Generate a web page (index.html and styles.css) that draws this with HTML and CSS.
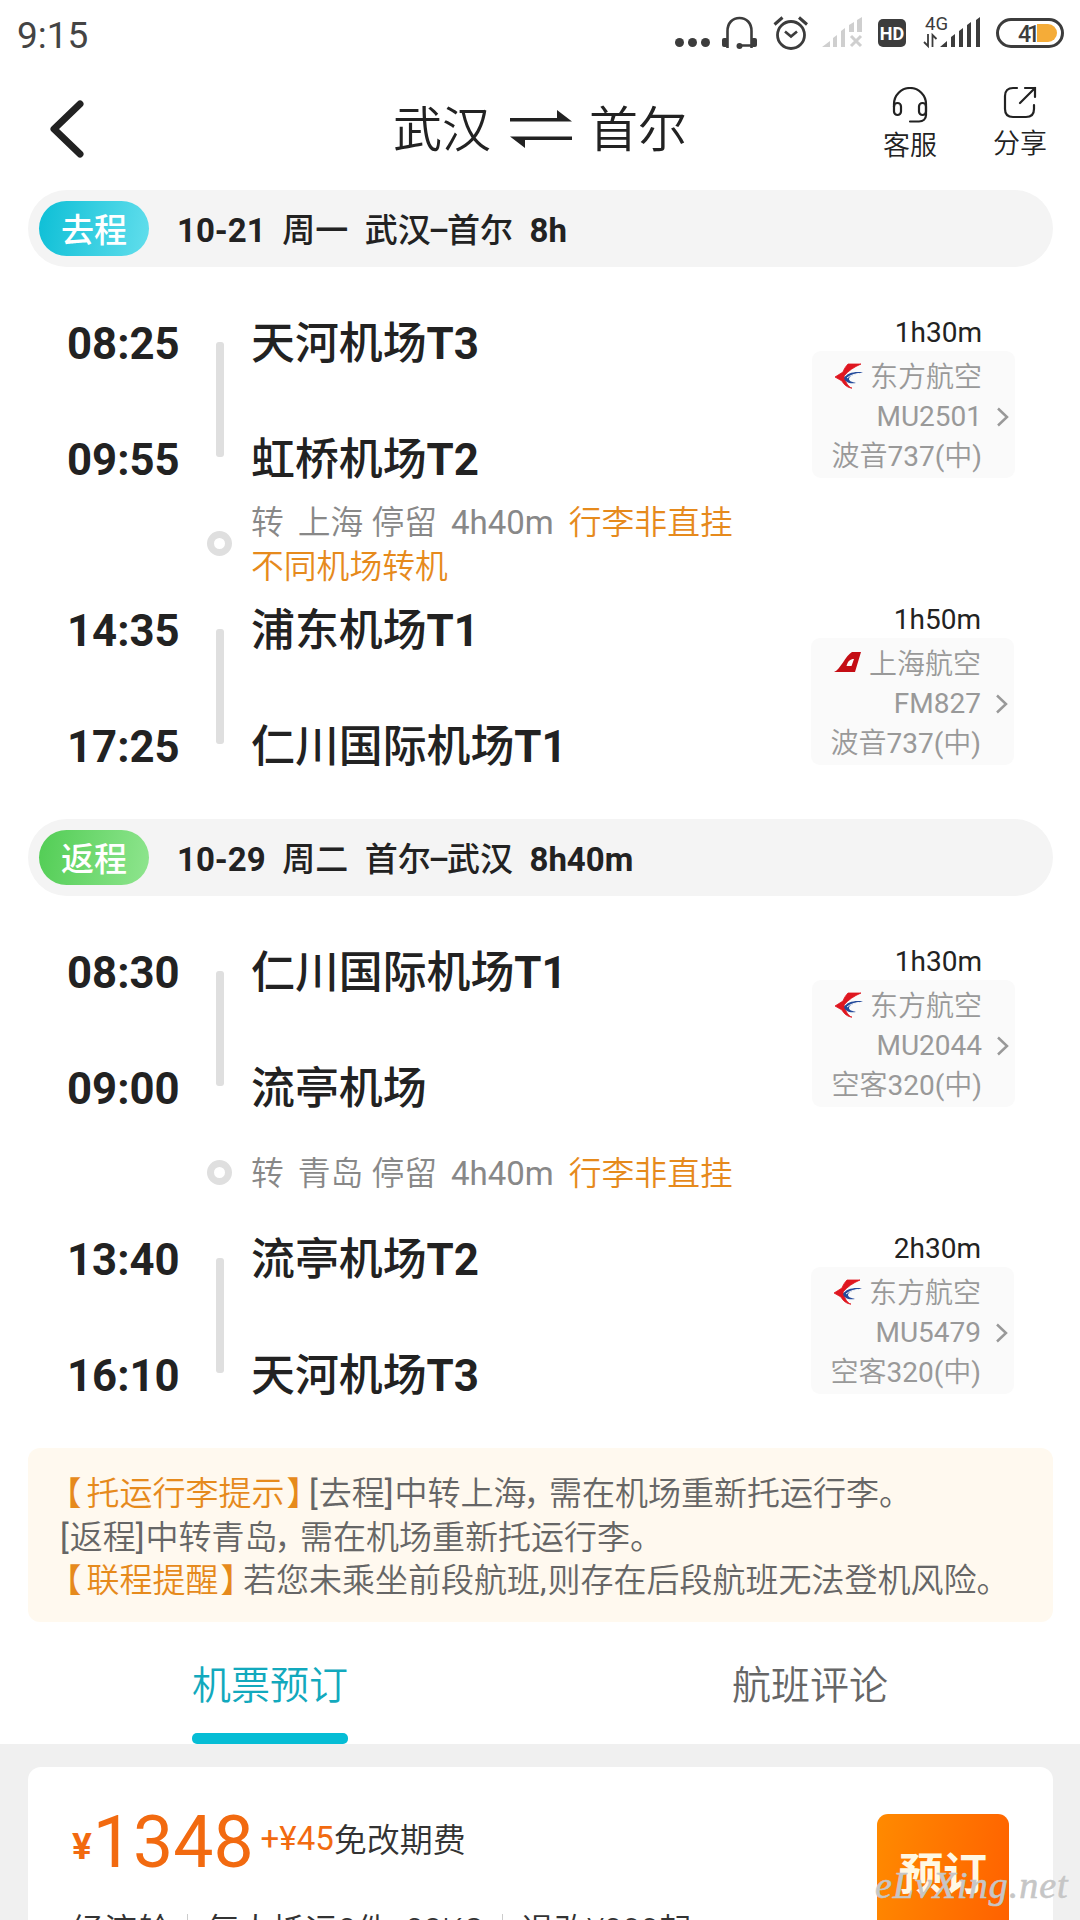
FILE: index.html
```html
<!DOCTYPE html>
<html lang="zh-CN">
<head>
<meta charset="utf-8">
<title>武汉 ⇌ 首尔</title>
<link rel="stylesheet" href="styles.css">
</head>
<body>
<svg class="defs" width="0" height="0">
  <symbol id="mu" viewBox="0 0 28 26">
    <path d="M26 1H13C11 3 9 6 8 9L0 14l7 4c2 4 6 7 10 7h-1c-3-2-5-5-6-9l-1-3C13 8 19 4 26 1z" fill="#df1620" stroke="#df1620" stroke-width=".8"/>
    <path d="M28 9.500C20 8 12 10 9 15c1 4 5 6 12 5-4-1-7-2-7-4 0-3 6-5.500 14-6.500z" fill="#244b9b"/>
    <path d="M12 15c3-2.500 7-4 12-4.500" stroke="#fafafa" stroke-width="1" fill="none"/>
  </symbol>
  <symbol id="fm" viewBox="0 0 28 26">
    <path fill-rule="evenodd" d="M0 22C6 20 12 5 18 2h9l-6 20zM12.500 16h5l2.500-7c-4 0-6 2-7.500 7z" fill="#c40d14"/>
  </symbol>
  <symbol id="chev" viewBox="0 0 14 20"><path d="M2 1.500l9 8.500-9 8.500" fill="none" stroke="#999" stroke-width="2.500"/></symbol>
</svg>
<div class="status">
  <span class="clock">9:15</span>
  <svg class="status-icons" width="400" height="40" viewBox="674 14 400 40" fill="none" stroke="#3c3c3c">
    <g fill="#3c3c3c" stroke="none"><circle cx="679.500" cy="42.500" r="4.500"/><circle cx="692.500" cy="42.500" r="4.500"/><circle cx="705.500" cy="42.500" r="4.500"/>
      <rect x="722" y="38" width="6" height="9" rx="2"/><rect x="751" y="38" width="6" height="9" rx="2"/><circle cx="739.500" cy="46" r="3"/></g>
    <path d="M727.500 48V31c0-8 5-13 12-13s12 5 12 13v17M740 45.500h11" stroke-width="2.600"/>
    <circle cx="791" cy="35" r="13.500" stroke-width="2.800"/><path d="M785 31.500l6 5 6-5" stroke-width="2.600"/><path d="M774.500 24.500l8-7M807 24.500l-8-7" stroke-width="3"/>
    <g fill="#cfcfcf" stroke="none"><path d="M822 47l8-6v6zM833 38l4-3v12h-4zM841 31l4-3v19h-4zM849 25l5-3v10h-5zM857 20l5-3v15h-5z"/></g>
    <path d="M851 36l10 10M861 36l-10 10" stroke="#cfcfcf" stroke-width="3"/>
    <rect x="878" y="19" width="28" height="28" rx="5" fill="#3c3c3c" stroke="none"/>
    <text class="hd" x="892" y="39.500" text-anchor="middle">HD</text>
    <text class="net" x="925" y="30">4G</text>
    <path d="M928 34v12l-4-4M932.500 47V35l4 4" stroke-width="1.800"/>
    <path d="M940 47l7-6v6zM951 37l4-3v13h-4zM959 31l4-3v19h-4zM967 25l4-3v25h-4zM976 20l4-3v30h-4z" fill="#3c3c3c" stroke="none"/>
    <rect x="997.500" y="19.500" width="65" height="27" rx="13.500" stroke-width="3"/>
    <path d="M1037 24h11a9 9 0 0 1 0 18h-11z" fill="#f5ac38" stroke="none"/>
    <text class="bat" x="1018" y="41.500" textLength="22">41</text>
  </svg>
</div>
<header class="nav">
  <svg width="36" height="60" viewBox="0 0 36 60"><path d="M31 5L5 30l26 25" fill="none" stroke="#222" stroke-width="7" stroke-linecap="round" stroke-linejoin="round"/></svg>
  <h1 class="route"><span>武汉</span><svg width="62" height="38" viewBox="0 0 62 38"><path d="M0 8h47V0l15 11.500H0zM62 30H15V38L0 26.500h62z" fill="#222"/></svg><span>首尔</span></h1>
  <div class="actions">
    <div class="action"><svg width="36" height="36" viewBox="0 0 36 36" fill="none" stroke="#222" stroke-width="2.200" stroke-linecap="round"><path d="M2 20v-3a16 16 0 0 1 32 0v11c0 4-3 6.500-7 6.500H18"/><rect x="2" y="16" width="7" height="12" rx="3.500"/><rect x="27" y="16" width="7" height="12" rx="3.500"/></svg><span>客服</span></div>
    <div class="action share"><svg width="36" height="36" viewBox="0 0 36 36" fill="none" stroke="#222" stroke-width="2.200" stroke-linecap="round"><path d="M15 3h-4c-5 0-8 3-8 8v13c0 5 3 8 8 8h13c5 0 8-3 8-8v-4M18 18L33 3M23 3h10v9"/></svg><span>分享</span></div>
  </div>
</header>
<main>
  <section class="trip">
    <div class="bar"><span class="tag">去程</span><div class="summary"><b>10-21</b><span>周一</span><span>武汉<em>–</em>首尔</span><b>8h</b></div></div>
    <div class="leg">
      <div class="times"><span>08:25</span><span>09:55</span></div><i class="line"></i>
      <div class="ports"><span>天河机场<b>T3</b></span><span>虹桥机场<b>T2</b></span></div>
      <div class="side"><span class="dur">1h30m</span><div class="flight"><div><svg class="logo"><use href="#mu"/></svg>东方航空</div><div class="no">MU2501<svg class="chev"><use href="#chev"/></svg></div><div>波音<b>737(</b>中<b>)</b></div></div></div>
    </div>
    <div class="transfer"><i class="ring"></i><div class="info"><p><span>转</span><span class="city">上海</span><span class="stay">停留</span><span class="wait">4h40m</span><b>行李非直挂</b></p><p><b>不同机场转机</b></p></div></div>
    <div class="leg">
      <div class="times"><span>14:35</span><span>17:25</span></div><i class="line"></i>
      <div class="ports"><span>浦东机场<b>T1</b></span><span>仁川国际机场<b>T1</b></span></div>
      <div class="side inset"><span class="dur">1h50m</span><div class="flight"><div><svg class="logo"><use href="#fm"/></svg>上海航空</div><div class="no">FM827<svg class="chev"><use href="#chev"/></svg></div><div>波音<b>737(</b>中<b>)</b></div></div></div>
    </div>
  </section>
  <section class="trip">
    <div class="bar"><span class="tag back">返程</span><div class="summary"><b>10-29</b><span>周二</span><span>首尔<em>–</em>武汉</span><b>8h40m</b></div></div>
    <div class="leg">
      <div class="times"><span>08:30</span><span>09:00</span></div><i class="line"></i>
      <div class="ports"><span>仁川国际机场<b>T1</b></span><span>流亭机场</span></div>
      <div class="side"><span class="dur">1h30m</span><div class="flight"><div><svg class="logo"><use href="#mu"/></svg>东方航空</div><div class="no">MU2044<svg class="chev"><use href="#chev"/></svg></div><div>空客<b>320(</b>中<b>)</b></div></div></div>
    </div>
    <div class="transfer"><i class="ring"></i><div class="info"><p><span>转</span><span class="city">青岛</span><span class="stay">停留</span><span class="wait">4h40m</span><b>行李非直挂</b></p></div></div>
    <div class="leg">
      <div class="times"><span>13:40</span><span>16:10</span></div><i class="line"></i>
      <div class="ports"><span>流亭机场<b>T2</b></span><span>天河机场<b>T3</b></span></div>
      <div class="side inset"><span class="dur">2h30m</span><div class="flight"><div><svg class="logo"><use href="#mu"/></svg>东方航空</div><div class="no">MU5479<svg class="chev"><use href="#chev"/></svg></div><div>空客<b>320(</b>中<b>)</b></div></div></div>
    </div>
  </section>
  <section class="notice">
    <p><b><span class="lb">【</span>托运行李提示<span class="rb">】</span></b><span class="sq">[</span>去程<span class="sq">]</span>中转上海<span class="cm">，</span>需在机场重新托运行李。</p>
    <p><span class="sq">[</span>返程<span class="sq">]</span>中转青岛<span class="cm">，</span>需在机场重新托运行李。</p>
    <p><b><span class="lb">【</span>联程提醒<span class="rb">】</span></b>若您未乘坐前段航班<span class="sq">,</span>则存在后段航班无法登机风险。</p>
  </section>
  <nav class="tabs"><span class="tab on">机票预订</span><span class="tab">航班评论</span></nav>
</main>
<section class="fares">
  <article class="fare">
    <div class="fare-info">
      <div class="price"><span class="yen">¥</span><span class="amount">1348</span><span class="plus">+¥45</span><span class="free">免改期费</span></div>
      <div class="terms"><span>经济舱</span><i></i><span>每人托运2件&nbsp; 23KG</span><i></i><span>退改¥200起</span><svg class="more"><use href="#chev"/></svg></div>
    </div>
    <div class="book">预订</div>
  </article>
</section>
<div class="mark">eLvXing.net</div>
</body>
</html>
```
FILE: styles.css
```css
* { box-sizing: border-box; margin: 0; padding: 0; }
body { width: 1080px; height: 1920px; overflow: hidden; position: relative; background: #fff; color: #222; font-family: Roboto, "Noto Sans CJK SC", sans-serif; display: flex; flex-direction: column; }
.defs { position: absolute; }
b, i, em { font-weight: inherit; font-style: normal; }
.status { height: 70px; padding: 14px 6px 0 17px; display: flex; justify-content: space-between; align-items: flex-start; color: #444; flex: none; }
.clock { font-size: 37px; line-height: 43px; }
.status-icons { flex: none; }
.status text { stroke: none; fill: #3c3c3c; }
.status .hd { fill: #fff; font-size: 18px; font-weight: 700; }
.status .net { font-size: 18.500px; }
.status .bat { font-size: 23px; font-weight: 500; }
.nav { height: 120px; flex: none; display: grid; grid-template-columns: 344px 294px 1fr; padding-left: 49px; align-items: start; }
.nav > svg { margin-top: 29px; }
.route { display: flex; justify-content: space-between; align-items: center; height: 72px; margin-top: 25px; font-size: 49px; font-weight: 350; line-height: 72px; }
.route svg { margin: -5px 0 0 1px; }
.actions { display: flex; justify-content: flex-end; gap: 56px; padding: 17px 33px 0 0; }
.action { display: flex; flex-direction: column; align-items: center; font-size: 27px; line-height: 36px; font-weight: 350; gap: 5px; }
.share { margin-top: -2px; }
main { flex: none; }
.trip { height: 629px; }
.bar { height: 77px; margin: 0 27px 49px 28px; padding-left: 11px; border-radius: 39px; background: #f4f4f4; display: flex; align-items: center; }
.tag { width: 110px; height: 55px; border-radius: 28px; background: linear-gradient(100deg, #0dbfd6, #62deec); color: #fff; font-size: 33px; font-weight: 500; line-height: 59px; text-align: center; margin-right: 28px; }
.tag.back { background: linear-gradient(100deg, #52cd55, #8fe58e); }
.summary { display: flex; gap: 16.500px; font-size: 33px; font-weight: 500; line-height: 48px; padding-top: 5px; }
.summary b { font-weight: 700; }
.summary em { margin: 0 -2.500px; }
.leg { height: 172px; display: grid; grid-template-columns: 149px 35px 561px 203px; padding-left: 67px; }
.times, .ports { display: flex; flex-direction: column; justify-content: space-between; font-size: 43.700px; line-height: 56px; font-weight: 500; }
.times, .ports b { font-weight: 700; }
.ports { font-size: 43.900px; }
.line { width: 8px; height: 115px; margin-top: 26px; border-radius: 3px; background: #dfdfdf; }
.side { font-size: 28px; font-weight: 350; color: #999; }
.side.inset { margin: 0 1px 0 -1px; }
.dur { display: block; height: 35px; line-height: 33px; padding-right: 33px; text-align: right; color: #222; font-weight: 400; }
.flight { height: 127px; border-radius: 9px; background: #fafafa; padding: 7px 33px 0 0; line-height: 39.300px; }
.flight div { display: flex; align-items: center; justify-content: flex-end; white-space: nowrap; }
.flight b { font-weight: 400; }
.flight .no { font-weight: 400; position: relative; }
.logo { width: 28px; height: 26px; margin: -3px 7px 0 0; }
.chev { width: 14px; height: 20px; position: absolute; right: -28px; }
.transfer { height: 115px; display: grid; grid-template-columns: 44px 1fr; padding-left: 207px; align-items: center; font-size: 32.800px; font-weight: 350; line-height: 44px; color: #888; }
.ring { width: 25px; height: 25px; border: 7px solid #dfdfdf; border-radius: 50%; margin-top: -5px; }
.transfer p { display: flex; }
.transfer b, .notice b { color: #e68a1c; font-weight: 350; }
.info { margin-top: -1px; }
.city { margin-left: 14px; }
.stay { margin-left: 8px; }
.wait { margin: 0 15px 0 14px; font-weight: 400; font-size: 33px; }
.notice { height: 174px; margin: 0 27px 0 28px; padding: 24px 0 0 32px; border-radius: 12px; background: #fff9ef; color: #666; font-size: 33px; line-height: 43.500px; font-weight: 350; white-space: nowrap; }
.lb, .rb, .cm { font-feature-settings: "halt"; }
.lb { margin: 0 5px 0 5px; }
.rb { margin: 0 6px 0 2px; }
.cm { margin: 0 9px 0 -3px; }
.sq { font-weight: 400; margin: 0 1px 0 0; }
.tabs { height: 122px; display: grid; grid-template-columns: 1fr 1fr; justify-items: center; }
.tab { width: 156px; display: flex; flex-direction: column; justify-content: space-between; font-size: 39px; line-height: 56px; padding-top: 36px; text-align: center; color: #666; font-weight: 350; }
.tab.on { color: #12a9bd; }
.tab.on::after { content: ""; height: 11px; border-radius: 5px; background: #06bdd5; }
.fares { flex: 1; background: #f0f0f0; padding: 23px 27px 0 28px; }
.fare { height: 260px; background: #fff; border-radius: 13px; padding: 47px 44px 0 43px; display: flex; justify-content: space-between; }
.price { display: flex; align-items: flex-start; color: #f26a10; white-space: nowrap; height: 93px; }
.yen { font-size: 37px; font-weight: 700; line-height: 44px; margin: 11px 0 0 1px; }
.amount { font-size: 71.500px; line-height: 84px; margin: -13px 8px 0 1px; }
.plus { font-size: 33px; line-height: 40px; margin: 5px 0 0 -1px; }
.free { font-size: 33px; line-height: 48px; margin-top: 3px; color: #333; font-weight: 350; }
.terms { display: flex; align-items: center; font-size: 33px; line-height: 48px; color: #333; font-weight: 350; white-space: nowrap; }
.terms i { width: 1px; height: 34px; background: #ccc; margin: 0 18px 0 17px; }
.more { width: 14px; height: 20px; margin-left: 10px; }
.book { width: 132px; height: 132px; border-radius: 11px; background: linear-gradient(100deg, #ff8a00, #ff6000); color: #fff8e4; font-size: 44px; font-weight: 700; line-height: 122px; text-align: center; }
.mark { position: absolute; left: 875px; top: 1861px; color: #c6c6c6; font: italic 400 38px/48px "Liberation Serif", serif; letter-spacing: 1px; -webkit-text-stroke: .6px #c6c6c6; }
```
